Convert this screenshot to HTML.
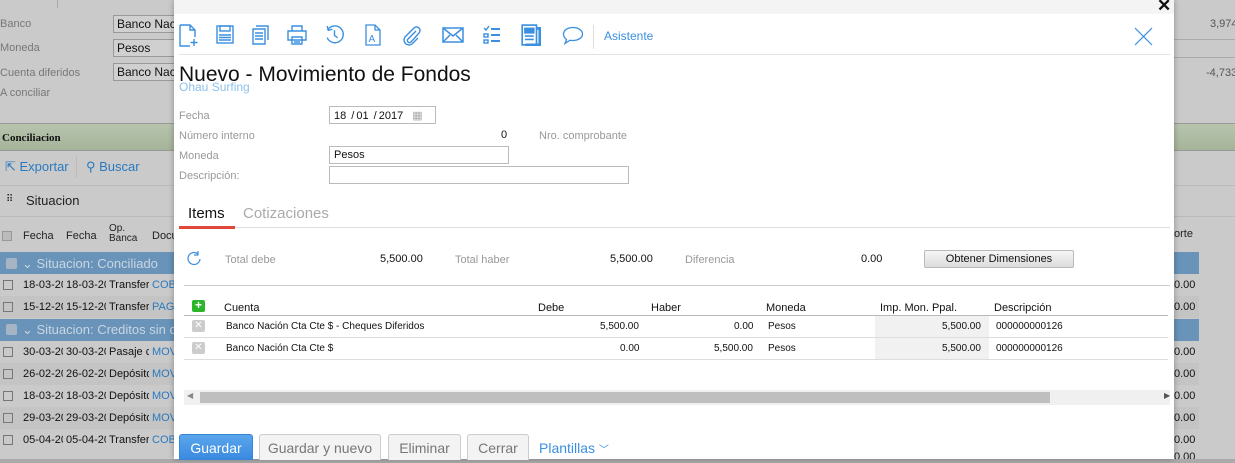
<!DOCTYPE html>
<html><head><meta charset="utf-8"><style>
*{box-sizing:border-box;margin:0;padding:0}
body{width:1235px;height:463px;overflow:hidden;background:#cacaca;font-family:"Liberation Sans",sans-serif;position:relative;font-size:12px}
.a{position:absolute;white-space:nowrap}
.bg{color:#777}
.inp{position:absolute;border:1px solid #999;background:#d0d0d0;height:18px;font-size:12px;padding:1px 3px;color:#111;white-space:nowrap;overflow:hidden}
.modal{position:absolute;left:174px;top:0;width:1000px;height:459px;background:#fff;box-shadow:0 0 6px rgba(0,0,0,.3)}
.lbl{color:#999;font-size:11px}
.fi{position:absolute;border:1px solid #bbb;height:18px;font-size:11px;padding:2px 4px;color:#111}
.ic{position:absolute;top:22px}
.btn{position:absolute;top:434px;height:26px;border:1px solid #ccc;border-bottom:none;border-radius:3px 3px 0 0;background:#f3f3f3;color:#777;font-size:14px;text-align:center;line-height:26px}
</style></head><body>
<!-- background -->
<div class="a" style="left:57px;top:0;width:1px;height:8px;background:#aaa"></div>
<div class="a bg" style="left:0;top:18px;font-size:11px">Banco</div>
<div class="a bg" style="left:0;top:42px;font-size:11px">Moneda</div>
<div class="a bg" style="left:0;top:67px;font-size:11px">Cuenta diferidos</div>
<div class="a bg" style="left:0;top:87px;font-size:11px">A conciliar</div>
<div class="inp" style="left:113px;top:15px;width:80px">Banco Nación</div>
<div class="inp" style="left:113px;top:39px;width:80px">Pesos</div>
<div class="inp" style="left:113px;top:63px;width:80px">Banco Nación</div>
<div class="a" style="left:1174px;top:39px;width:61px;height:1px;background:#aaa"></div>
<div class="a" style="left:1174px;top:57px;width:61px;height:1px;background:#aaa"></div>
<div class="a bg" style="left:1210px;top:18px;font-size:11px;color:#555">3,974</div>
<div class="a bg" style="left:1206px;top:67px;font-size:11px;color:#555">-4,733</div>
<div class="a" style="left:0;top:123px;width:1235px;height:28px;background:linear-gradient(#b8c4ae,#a6b49a);border-top:1px solid #999;border-bottom:1px solid #999"></div>
<div class="a" style="left:2px;top:132px;font-family:'Liberation Serif',serif;font-weight:bold;font-size:11px;color:#111">Conciliacion</div>
<div class="a" style="left:5px;top:159px;font-size:13px;color:#2a7ac0">⇱ Exportar</div>
<div class="a" style="left:76px;top:156px;width:1px;height:22px;background:#bbb"></div>
<div class="a" style="left:86px;top:159px;font-size:13px;color:#2a7ac0">⚲ Buscar</div>
<div class="a" style="left:0;top:185px;width:1235px;height:1px;background:#bbb"></div>
<div class="a" style="left:6px;top:194px;font-size:10px;color:#222">⠿</div>
<div class="a" style="left:26px;top:193px;font-size:13px;color:#222">Situacion</div>
<div class="a" style="left:0;top:216px;width:1235px;height:1px;background:#bbb"></div>
<div class="a" style="left:2px;top:231px;width:10px;height:10px;border:1px solid #999;background:#bbb"></div>
<div class="a" style="left:23px;top:230px;font-size:11px;color:#222">Fecha</div>
<div class="a" style="left:66px;top:230px;font-size:11px;color:#222">Fecha</div>
<div class="a" style="left:109px;top:224px;font-size:10px;color:#222;line-height:10px">Op.<br>Banca</div>
<div class="a" style="left:152px;top:230px;font-size:11px;color:#222">Docu</div>
<div class="a" style="left:1174px;top:228px;font-size:11px;color:#222">orte</div>
<div class="a" style="left:0;top:252px;width:1199px;height:22px;background:#6993b8"></div>
<div class="a" style="left:0;top:319px;width:1199px;height:22px;background:#6993b8"></div>
<div class="a" style="left:6px;top:258px;width:11px;height:11px;background:#a5b5c5;border-radius:2px"></div>
<div class="a" style="left:22px;top:256px;font-size:13px;color:#c9d6e3">⌄ Situacion: Conciliado</div>
<div class="a" style="left:6px;top:324px;width:11px;height:11px;background:#a5b5c5;border-radius:2px"></div>
<div class="a" style="left:22px;top:322px;font-size:13px;color:#c9d6e3">⌄ Situacion: Creditos sin co</div>
<div id="rows"></div>
<div class="a" style="left:0;top:459px;width:1235px;height:4px;background:#aaa"></div>
<script>
var r=[[274,'18-03-20','Transfer','COB'],[296,'15-12-20','Transfer','PAG'],[341,'30-03-20','Pasaje c','MOV'],[363,'26-02-20','Depósito','MOV'],[385,'18-03-20','Depósito','MOV'],[407,'29-03-20','Depósito','MOV'],[429,'05-04-20','Transfer','COB']];
var h='';r.forEach(function(x,i){var y=x[0];
h+='<div class="a" style="left:0;top:'+y+'px;width:1199px;height:22px;background:'+(i%2?'#c4c4c4':'#cacaca')+'"></div>';
h+='<div class="a" style="left:3px;top:'+(y+6)+'px;width:10px;height:10px;border:1px solid #777"></div>';
function c(l,w,t,col){return '<div class="a" style="left:'+l+'px;width:'+w+'px;overflow:hidden;top:'+(y+5)+'px;font-size:11px;color:'+col+'">'+t+'</div>';}
h+=c(23,40,x[1],'#111')+c(66,40,x[1],'#111')+c(109,40,x[2],'#111')+c(152,22,x[3],'#2a7ac0');
h+='<div class="a" style="left:1174px;top:'+(y+5)+'px;font-size:11px;color:#111">0.00</div>';});
h+='<div class="a" style="left:1174px;top:451px;font-size:11px;color:#111">0.00</div>';
document.getElementById('rows').innerHTML=h;
</script>
<!-- modal -->
<div class="modal">
<div class="a" style="left:0;top:0;width:1000px;height:14px;background:#f4f4f4"></div>
<div class="a" style="left:983px;top:-4px;font-size:17px;font-weight:bold;color:#111">✕</div>
<svg class="ic" style="left:5px;top:24px" width="20" height="23" viewBox="0 0 20 23" fill="none" stroke="#3a8fe0" stroke-width="1.4"><path d="M1 1h10l5 5v7M11 1v5h5M1 1v21h10"/><path d="M15 15v7M11.5 18.5h7"/></svg>
<svg class="ic" style="left:42px;top:25px" width="18" height="20" viewBox="0 0 18 20" fill="none" stroke="#3a8fe0" stroke-width="1.4"><rect x="1" y="1" width="16" height="17"/><rect x="4" y="1" width="10" height="5"/><path d="M3 10h12M3 12.5h12M3 15h12"/></svg>
<svg class="ic" style="left:78px;top:25px" width="17" height="20" viewBox="0 0 17 20" fill="none" stroke="#3a8fe0" stroke-width="1.4"><path d="M4 1h12v14M1 4h12v15H1z M3 8h8M3 11h8M3 14h8"/></svg>
<svg class="ic" style="left:113px;top:25px" width="20" height="20" viewBox="0 0 20 20" fill="none" stroke="#3a8fe0" stroke-width="1.4"><path d="M5 6V1h10v5M1 6h18v9H1zM5 12h10v7H5zM7 15h6M7 17h6"/></svg>
<svg class="ic" style="left:150px;top:24px" width="21" height="21" viewBox="0 0 20 20" fill="none" stroke="#3a8fe0" stroke-width="1.3"><path d="M4 5A8 8 0 1 1 3 13" /><path d="M3 2l1 4 4-1M10 6v5l3 2"/></svg>
<svg class="ic" style="left:191px;top:24px" width="16" height="22" viewBox="0 0 16 22" fill="none" stroke="#3a8fe0" stroke-width="1.3"><path d="M1 1h9l5 5v15H1zM10 1v5h5"/><text x="3.5" y="18" font-size="10" fill="#3a8fe0" stroke="none" font-family="Liberation Sans">A</text></svg>
<svg class="ic" style="left:227px;top:24px" width="20" height="22" viewBox="0 0 20 20" fill="none" stroke="#3a8fe0" stroke-width="1.4"><path d="M15 6l-8 8a2 2 0 0 0 3 3l8-9a3.5 3.5 0 0 0-5-5l-9 9a5 5 0 0 0 7 7l6-6"/></svg>
<svg class="ic" style="left:268px;top:26px" width="22" height="18" viewBox="0 0 22 18" fill="none" stroke="#3a8fe0" stroke-width="1.5"><rect x="1" y="2" width="20" height="14"/><path d="M1 2l10 8 10-8M1 16l7-7M21 16l-7-7"/></svg>
<svg class="ic" style="left:308px;top:25px" width="20" height="20" viewBox="0 0 20 20" fill="none" stroke="#3a8fe0" stroke-width="1.4"><path d="M2 3l2 2 3-4"/><rect x="2" y="9" width="4" height="3"/><rect x="2" y="15" width="4" height="3"/><path d="M9 4h9M9 10h9M9 16h9" stroke-width="2"/></svg>
<svg class="ic" style="left:347px;top:24px" width="20" height="22" viewBox="0 0 18 20" fill="none" stroke="#3a8fe0" stroke-width="1.5"><rect x="1" y="1" width="13" height="18"/><path d="M14 4h3v15H4" stroke-width="2.5"/><rect x="3.5" y="4" width="8" height="4" fill="#3a8fe0"/><path d="M3.5 11h8M3.5 14h8"/></svg>
<svg class="ic" style="left:388px;top:25px" width="22" height="21" viewBox="0 0 22 20" fill="none" stroke="#3a8fe0" stroke-width="1.3"><path d="M11 2c5.5 0 9.5 3 9.5 6.5S16.5 15 11 15c-1 0-2 0-3-.3L3 18l1.5-4C2.5 12.5 1.5 10.5 1.5 8.5 1.5 5 5.5 2 11 2z"/></svg>
<div class="a" style="left:419px;top:25px;width:1px;height:24px;background:#ddd"></div>
<div class="a" style="left:430px;top:29px;font-size:12px;color:#3a8fe0">Asistente</div>
<svg class="a" style="left:960px;top:27px" width="20" height="19" viewBox="0 0 20 19" stroke="#3a8fe0" stroke-width="1.2"><path d="M1 1l17 17M18 1L1 18"/></svg>
<div class="a" style="left:5px;top:54px;width:991px;height:1px;background:#e3e3e3"></div>
<div class="a" style="left:5px;top:63px;font-size:21px;color:#111">Nuevo - Movimiento de Fondos</div>
<div class="a" style="left:5px;top:80px;font-size:12px;color:#8ec0ea">Ohau Surfing</div>
<div class="a lbl" style="left:5px;top:110px">Fecha</div>
<div class="fi" style="left:155px;top:106px;width:107px">18 <span style="padding:0 2px">/</span>01 <span style="padding:0 2px">/</span>2017 <span style="color:#aaa;margin-left:6px">▦</span></div>
<div class="a lbl" style="left:5px;top:130px">Número interno</div>
<div class="a" style="left:327px;top:129px;font-size:11px;color:#111">0</div>
<div class="a lbl" style="left:365px;top:130px">Nro. comprobante</div>
<div class="a lbl" style="left:5px;top:150px">Moneda</div>
<div class="fi" style="left:155px;top:146px;width:180px">Pesos</div>
<div class="a lbl" style="left:5px;top:170px">Descripción:</div>
<div class="fi" style="left:155px;top:166px;width:300px"></div>
<div class="a" style="left:14px;top:205px;font-size:15px;color:#111">Items</div>
<div class="a" style="left:69px;top:205px;font-size:15px;color:#aaa">Cotizaciones</div>
<div class="a" style="left:5px;top:227px;width:991px;height:1px;background:#ddd"></div>
<div class="a" style="left:5px;top:226px;width:56px;height:3px;background:#e0463a"></div>
<svg class="a" style="left:12px;top:250px" width="17" height="17" viewBox="0 0 17 17" fill="none" stroke="#3a8fe0" stroke-width="1.2"><path d="M14 9A6 6 0 1 1 12 4"/><path d="M12 1v4h-4" /></svg>
<div class="a lbl" style="left:51px;top:254px">Total debe</div>
<div class="a" style="left:206px;top:253px;font-size:11px;color:#111">5,500.00</div>
<div class="a lbl" style="left:281px;top:254px">Total haber</div>
<div class="a" style="left:436px;top:253px;font-size:11px;color:#111">5,500.00</div>
<div class="a lbl" style="left:511px;top:254px">Diferencia</div>
<div class="a" style="left:687px;top:253px;font-size:11px;color:#111">0.00</div>
<div class="a" style="left:750px;top:250px;width:150px;height:18px;border:1px solid #bbb;border-radius:2px;background:linear-gradient(#f6f6f6,#dcdcdc);font-size:11px;text-align:center;line-height:16px;color:#111">Obtener Dimensiones</div>
<div class="a" style="left:10px;top:285px;width:986px;height:1px;background:#ccc"></div>
<div class="a" style="left:18px;top:300px;width:13px;height:12px;background:#2bb52b;border-radius:2px;color:#fff;font-size:12px;line-height:11px;text-align:center;font-weight:bold">+</div>
<div class="a" style="left:50px;top:302px;font-size:11px;color:#111">Cuenta</div>
<div class="a" style="left:364px;top:302px;font-size:11px;color:#111">Debe</div>
<div class="a" style="left:477px;top:302px;font-size:11px;color:#111">Haber</div>
<div class="a" style="left:592px;top:302px;font-size:11px;color:#111">Moneda</div>
<div class="a" style="left:706px;top:302px;font-size:11px;color:#111">Imp. Mon. Ppal.</div>
<div class="a" style="left:820px;top:302px;font-size:11px;color:#111">Descripción</div>
<div class="a" style="left:10px;top:315px;width:984px;height:1px;background:#bbb"></div>
<div class="a" style="left:701px;top:316px;width:114px;height:43px;background:#f1f1f1"></div>
<div class="a" style="left:10px;top:337px;width:984px;height:1px;background:#ddd"></div>
<div class="a" style="left:10px;top:359px;width:984px;height:1px;background:#ddd"></div>
<div class="a" style="left:18px;top:320px;width:13px;height:12px;background:#ccc;border-radius:2px;color:#fff;font-size:10px;line-height:12px;text-align:center">✕</div>
<div class="a" style="left:18px;top:342px;width:13px;height:12px;background:#ccc;border-radius:2px;color:#fff;font-size:10px;line-height:12px;text-align:center">✕</div>
<div class="a" style="left:52px;top:321px;font-size:10px;color:#111">Banco Nación Cta Cte $ - Cheques Diferidos</div>
<div class="a" style="left:52px;top:343px;font-size:10px;color:#111">Banco Nación Cta Cte $</div>
<div class="a" style="left:426px;top:321px;font-size:10px;color:#111">5,500.00</div>
<div class="a" style="left:446px;top:343px;font-size:10px;color:#111">0.00</div>
<div class="a" style="left:560px;top:321px;font-size:10px;color:#111">0.00</div>
<div class="a" style="left:540px;top:343px;font-size:10px;color:#111">5,500.00</div>
<div class="a" style="left:594px;top:321px;font-size:10px;color:#111">Pesos</div>
<div class="a" style="left:594px;top:343px;font-size:10px;color:#111">Pesos</div>
<div class="a" style="left:768px;top:321px;font-size:10px;color:#111">5,500.00</div>
<div class="a" style="left:768px;top:343px;font-size:10px;color:#111">5,500.00</div>
<div class="a" style="left:822px;top:321px;font-size:10px;color:#111">000000000126</div>
<div class="a" style="left:822px;top:343px;font-size:10px;color:#111">000000000126</div>
<div class="a" style="left:10px;top:390px;width:986px;height:15px;background:#f0f0f0"></div>
<div class="a" style="left:26px;top:392px;width:850px;height:11px;background:#bfbfbf"></div>
<div class="a" style="left:13px;top:391px;font-size:8px;color:#888">◀</div>
<div class="a" style="left:990px;top:391px;font-size:8px;color:#555">▶</div>
<div class="a" style="left:5px;top:434px;width:74px;height:26px;background:linear-gradient(#5aa6ec,#3a8ae0);border:1px solid #3a86d6;border-radius:3px 3px 0 0;color:#fff;font-size:14px;text-align:center;line-height:26px">Guardar</div>
<div class="btn" style="left:85px;width:122px">Guardar y nuevo</div>
<div class="btn" style="left:214px;width:73px">Eliminar</div>
<div class="btn" style="left:293px;width:62px">Cerrar</div>
<div class="a" style="left:365px;top:440px;font-size:14px;color:#3a8fe0">Plantillas <span style="font-size:10px">﹀</span></div>
</div>
</body></html>
